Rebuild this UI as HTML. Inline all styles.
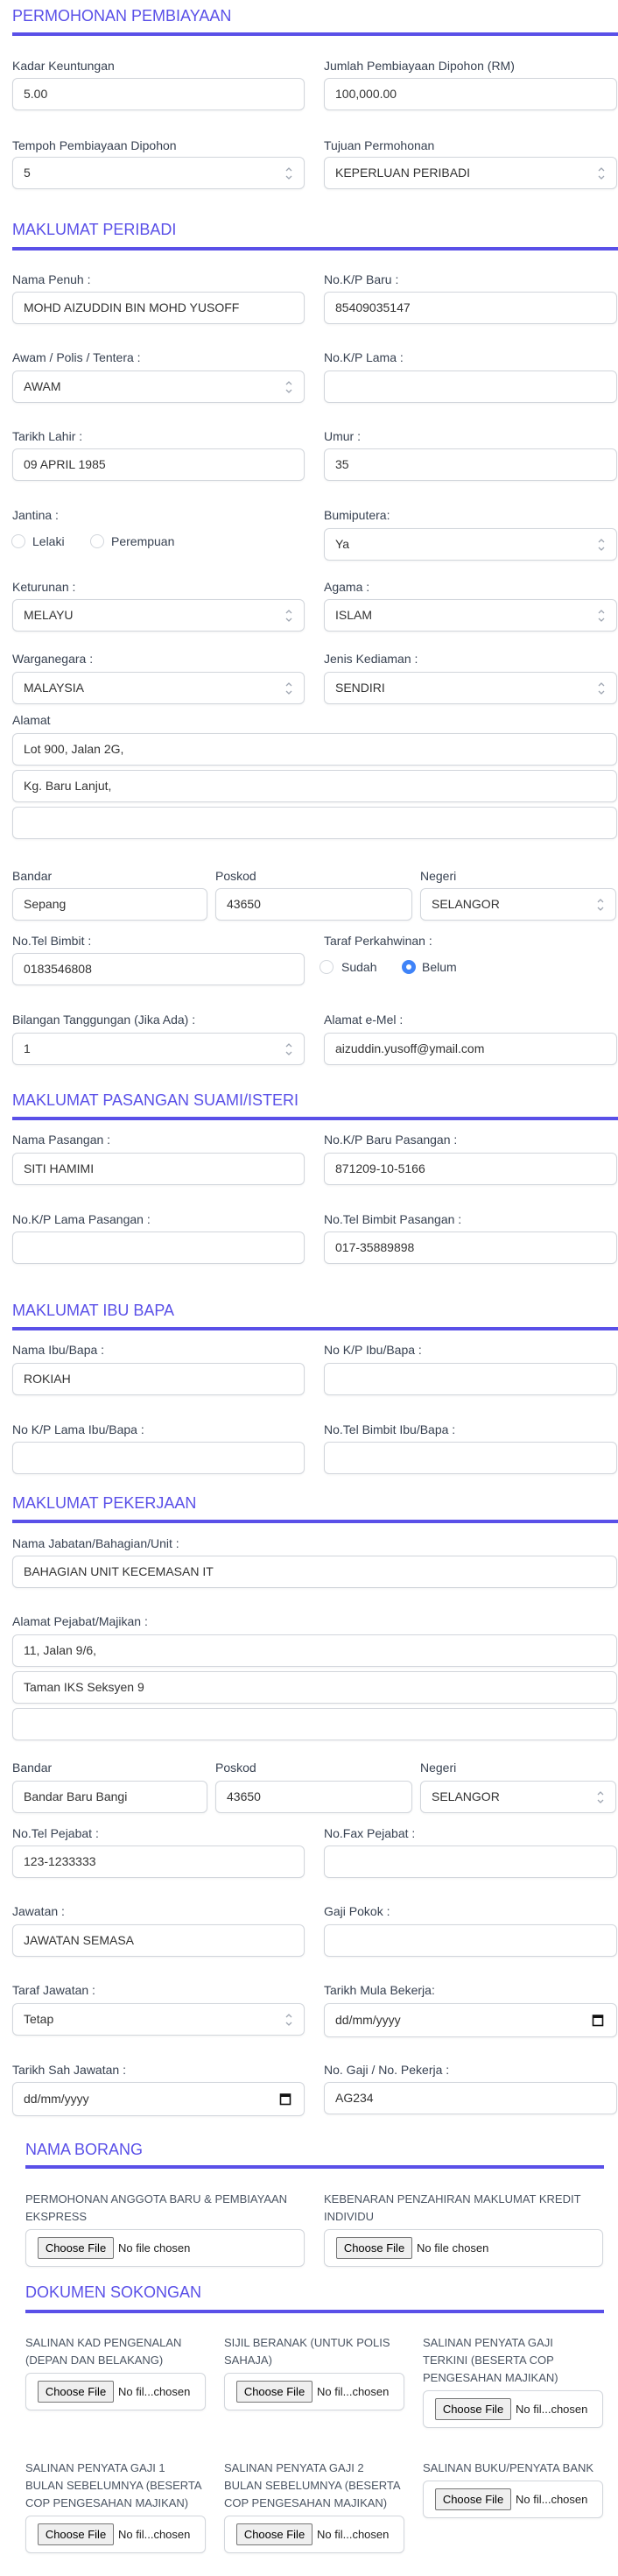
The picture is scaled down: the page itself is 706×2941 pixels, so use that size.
<!DOCTYPE html>
<html><head><meta charset="utf-8"><style>
*{margin:0;padding:0;box-sizing:border-box}
body{width:706px;height:2941px;position:relative;background:#fff;font-family:"Liberation Sans",Arial,sans-serif;overflow:hidden}
.h{position:absolute;left:14px;font-size:18px;line-height:20px;color:#5a50e8;white-space:nowrap}
.b{position:absolute;left:14px;right:0;height:4px;background:#5a50e8}
.l{position:absolute;font-size:14px;line-height:16px;color:#374151;white-space:nowrap}
.i{position:absolute;height:37px;border:1px solid #d2d6dc;border-radius:6px;box-shadow:0 1px 2px rgba(0,0,0,.05);padding-left:12px;line-height:35px;font-size:14px;color:#333;background:#fff;white-space:nowrap}
.L{left:14px;width:334px}.R{left:370px;width:335px}.F{left:14px;width:691px}
.s::after{content:"";position:absolute;right:12px;top:10px;width:10px;height:16px;background:url("data:,") }
.chev{position:absolute;right:12px;top:9px}
.cal{position:absolute;right:14px;top:10px}
.r{position:absolute;width:16px;height:16px;border:1px solid #d2d6dc;border-radius:50%;background:#fff}
.rc{background:#3f83f8;border:none}
.rc::after{content:"";position:absolute;left:5px;top:5px;width:6px;height:6px;border-radius:50%;background:#fff}
.rt{position:absolute;font-size:14px;line-height:16px;color:#374151}
.ul{position:absolute;font-size:13px;line-height:20px;color:#4b5563;white-space:nowrap}
.fb{position:absolute;height:43px;border:1px solid #d2d6dc;border-radius:6px;box-shadow:0 1px 2px rgba(0,0,0,.05);background:#fff;white-space:nowrap}
.btn{position:absolute;left:13px;top:8px;height:25px;width:87px;border:1px solid #767676;border-radius:2px;background:#efefef;font-size:13px;line-height:23px;text-align:center;color:#000}
.nf{position:absolute;left:105px;top:8px;font-size:13px;line-height:25px;color:#222}
</style></head><body>

<div class="h" style="top:8px">PERMOHONAN PEMBIAYAAN</div><div class="b" style="top:37px"></div>
<div class="l" style="left:14px;top:67px">Kadar Keuntungan</div><div class="l" style="left:370px;top:67px">Jumlah Pembiayaan Dipohon (RM)</div>
<div class="i L" style="top:89px">5.00</div><div class="i R" style="top:89px">100,000.00</div>
<div class="l" style="left:14px;top:158px">Tempoh Pembiayaan Dipohon</div><div class="l" style="left:370px;top:158px">Tujuan Permohonan</div>
<div class="i L" style="top:179px">5<svg class="chev" width="10" height="18" viewBox="0 0 10 18"><path d="M2 6l3-3 3 3M2 12l3 3 3-3" fill="none" stroke="#9fa6b2" stroke-width="1.3"/></svg></div>
<div class="i R" style="top:179px">KEPERLUAN PERIBADI<svg class="chev" width="10" height="18" viewBox="0 0 10 18"><path d="M2 6l3-3 3 3M2 12l3 3 3-3" fill="none" stroke="#9fa6b2" stroke-width="1.3"/></svg></div>

<div class="h" style="top:252px">MAKLUMAT PERIBADI</div><div class="b" style="top:282px"></div>
<div class="l" style="left:14px;top:311px">Nama Penuh :</div><div class="l" style="left:370px;top:311px">No.K/P Baru :</div>
<div class="i L" style="top:333px">MOHD AIZUDDIN BIN MOHD YUSOFF</div><div class="i R" style="top:333px">85409035147</div>
<div class="l" style="left:14px;top:400px">Awam / Polis / Tentera :</div><div class="l" style="left:370px;top:400px">No.K/P Lama :</div>
<div class="i L" style="top:423px">AWAM<svg class="chev" width="10" height="18" viewBox="0 0 10 18"><path d="M2 6l3-3 3 3M2 12l3 3 3-3" fill="none" stroke="#9fa6b2" stroke-width="1.3"/></svg></div><div class="i R" style="top:423px"></div>
<div class="l" style="left:14px;top:490px">Tarikh Lahir :</div><div class="l" style="left:370px;top:490px">Umur :</div>
<div class="i L" style="top:512px">09 APRIL 1985</div><div class="i R" style="top:512px">35</div>
<div class="l" style="left:14px;top:580px">Jantina :</div><div class="l" style="left:370px;top:580px">Bumiputera:</div>
<div class="r" style="left:13px;top:610px"></div><div class="rt" style="left:37px;top:610px">Lelaki</div>
<div class="r" style="left:103px;top:610px"></div><div class="rt" style="left:127px;top:610px">Perempuan</div>
<div class="i R" style="top:603px">Ya<svg class="chev" width="10" height="18" viewBox="0 0 10 18"><path d="M2 6l3-3 3 3M2 12l3 3 3-3" fill="none" stroke="#9fa6b2" stroke-width="1.3"/></svg></div>
<div class="l" style="left:14px;top:662px">Keturunan :</div><div class="l" style="left:370px;top:662px">Agama :</div>
<div class="i L" style="top:684px">MELAYU<svg class="chev" width="10" height="18" viewBox="0 0 10 18"><path d="M2 6l3-3 3 3M2 12l3 3 3-3" fill="none" stroke="#9fa6b2" stroke-width="1.3"/></svg></div>
<div class="i R" style="top:684px">ISLAM<svg class="chev" width="10" height="18" viewBox="0 0 10 18"><path d="M2 6l3-3 3 3M2 12l3 3 3-3" fill="none" stroke="#9fa6b2" stroke-width="1.3"/></svg></div>
<div class="l" style="left:14px;top:744px">Warganegara :</div><div class="l" style="left:370px;top:744px">Jenis Kediaman :</div>
<div class="i L" style="top:767px">MALAYSIA<svg class="chev" width="10" height="18" viewBox="0 0 10 18"><path d="M2 6l3-3 3 3M2 12l3 3 3-3" fill="none" stroke="#9fa6b2" stroke-width="1.3"/></svg></div>
<div class="i R" style="top:767px">SENDIRI<svg class="chev" width="10" height="18" viewBox="0 0 10 18"><path d="M2 6l3-3 3 3M2 12l3 3 3-3" fill="none" stroke="#9fa6b2" stroke-width="1.3"/></svg></div>
<div class="l" style="left:14px;top:814px">Alamat</div>
<div class="i F" style="top:837px">Lot 900, Jalan 2G,</div>
<div class="i F" style="top:879px">Kg. Baru Lanjut,</div>
<div class="i F" style="top:921px"></div>
<div class="l" style="left:14px;top:992px">Bandar</div><div class="l" style="left:246px;top:992px">Poskod</div><div class="l" style="left:480px;top:992px">Negeri</div>
<div class="i" style="left:14px;width:223px;top:1014px">Sepang</div>
<div class="i" style="left:246px;width:225px;top:1014px">43650</div>
<div class="i" style="left:480px;width:224px;top:1014px">SELANGOR<svg class="chev" width="10" height="18" viewBox="0 0 10 18"><path d="M2 6l3-3 3 3M2 12l3 3 3-3" fill="none" stroke="#9fa6b2" stroke-width="1.3"/></svg></div>
<div class="l" style="left:14px;top:1066px">No.Tel Bimbit :</div><div class="l" style="left:370px;top:1066px">Taraf Perkahwinan :</div>
<div class="i L" style="top:1088px">0183546808</div>
<div class="r" style="left:365px;top:1096px"></div><div class="rt" style="left:390px;top:1096px">Sudah</div>
<div class="r rc" style="left:459px;top:1096px"></div><div class="rt" style="left:482px;top:1096px">Belum</div>
<div class="l" style="left:14px;top:1156px">Bilangan Tanggungan (Jika Ada) :</div><div class="l" style="left:370px;top:1156px">Alamat e-Mel :</div>
<div class="i L" style="top:1179px">1<svg class="chev" width="10" height="18" viewBox="0 0 10 18"><path d="M2 6l3-3 3 3M2 12l3 3 3-3" fill="none" stroke="#9fa6b2" stroke-width="1.3"/></svg></div>
<div class="i R" style="top:1179px">aizuddin.yusoff@ymail.com</div>

<div class="h" style="top:1246px">MAKLUMAT PASANGAN SUAMI/ISTERI</div><div class="b" style="top:1275px"></div>
<div class="l" style="left:14px;top:1293px">Nama Pasangan :</div><div class="l" style="left:370px;top:1293px">No.K/P Baru Pasangan :</div>
<div class="i L" style="top:1316px">SITI HAMIMI</div><div class="i R" style="top:1316px">871209-10-5166</div>
<div class="l" style="left:14px;top:1384px">No.K/P Lama Pasangan :</div><div class="l" style="left:370px;top:1384px">No.Tel Bimbit Pasangan :</div>
<div class="i L" style="top:1406px"></div><div class="i R" style="top:1406px">017-35889898</div>

<div class="h" style="top:1486px">MAKLUMAT IBU BAPA</div><div class="b" style="top:1515px"></div>
<div class="l" style="left:14px;top:1533px">Nama Ibu/Bapa :</div><div class="l" style="left:370px;top:1533px">No K/P Ibu/Bapa :</div>
<div class="i L" style="top:1556px">ROKIAH</div><div class="i R" style="top:1556px"></div>
<div class="l" style="left:14px;top:1624px">No K/P Lama Ibu/Bapa :</div><div class="l" style="left:370px;top:1624px">No.Tel Bimbit Ibu/Bapa :</div>
<div class="i L" style="top:1646px"></div><div class="i R" style="top:1646px"></div>

<div class="h" style="top:1706px">MAKLUMAT PEKERJAAN</div><div class="b" style="top:1735px"></div>
<div class="l" style="left:14px;top:1754px">Nama Jabatan/Bahagian/Unit :</div>
<div class="i F" style="top:1776px">BAHAGIAN UNIT KECEMASAN IT</div>
<div class="l" style="left:14px;top:1843px">Alamat Pejabat/Majikan :</div>
<div class="i F" style="top:1866px">11, Jalan 9/6,</div>
<div class="i F" style="top:1908px">Taman IKS Seksyen 9</div>
<div class="i F" style="top:1950px"></div>
<div class="l" style="left:14px;top:2010px">Bandar</div><div class="l" style="left:246px;top:2010px">Poskod</div><div class="l" style="left:480px;top:2010px">Negeri</div>
<div class="i" style="left:14px;width:223px;top:2033px">Bandar Baru Bangi</div>
<div class="i" style="left:246px;width:225px;top:2033px">43650</div>
<div class="i" style="left:480px;width:224px;top:2033px">SELANGOR<svg class="chev" width="10" height="18" viewBox="0 0 10 18"><path d="M2 6l3-3 3 3M2 12l3 3 3-3" fill="none" stroke="#9fa6b2" stroke-width="1.3"/></svg></div>
<div class="l" style="left:14px;top:2085px">No.Tel Pejabat :</div><div class="l" style="left:370px;top:2085px">No.Fax Pejabat :</div>
<div class="i L" style="top:2107px">123-1233333</div><div class="i R" style="top:2107px"></div>
<div class="l" style="left:14px;top:2174px">Jawatan :</div><div class="l" style="left:370px;top:2174px">Gaji Pokok :</div>
<div class="i L" style="top:2197px">JAWATAN SEMASA</div><div class="i R" style="top:2197px"></div>
<div class="l" style="left:14px;top:2264px">Taraf Jawatan :</div><div class="l" style="left:370px;top:2264px">Tarikh Mula Bekerja:</div>
<div class="i L" style="top:2287px">Tetap<svg class="chev" width="10" height="18" viewBox="0 0 10 18"><path d="M2 6l3-3 3 3M2 12l3 3 3-3" fill="none" stroke="#9fa6b2" stroke-width="1.3"/></svg></div>
<div class="i R" style="top:2287px;height:39px;line-height:37px">dd/mm/yyyy<svg class="cal" width="14" height="16" viewBox="0 0 14 16"><rect x="1.5" y="3" width="11" height="11.5" fill="none" stroke="#111" stroke-width="1.6"/><rect x="1.5" y="3" width="11" height="3" fill="#111"/></svg></div>
<div class="l" style="left:14px;top:2355px">Tarikh Sah Jawatan :</div><div class="l" style="left:370px;top:2355px">No. Gaji / No. Pekerja :</div>
<div class="i L" style="top:2377px;height:39px;line-height:37px">dd/mm/yyyy<svg class="cal" width="14" height="16" viewBox="0 0 14 16"><rect x="1.5" y="3" width="11" height="11.5" fill="none" stroke="#111" stroke-width="1.6"/><rect x="1.5" y="3" width="11" height="3" fill="#111"/></svg></div>
<div class="i R" style="top:2377px">AG234</div>

<div class="h" style="left:29px;top:2444px">NAMA BORANG</div><div class="b" style="left:29px;right:16px;top:2472px"></div>
<div class="ul" style="left:29px;top:2501px">PERMOHONAN ANGGOTA BARU &amp; PEMBIAYAAN<br>EKSPRESS</div>
<div class="ul" style="left:370px;top:2501px">KEBENARAN PENZAHIRAN MAKLUMAT KREDIT<br>INDIVIDU</div>
<div class="fb" style="left:29px;width:319px;top:2545px"><div class="btn">Choose File</div><div class="nf">No file chosen</div></div>
<div class="fb" style="left:370px;width:319px;top:2545px"><div class="btn">Choose File</div><div class="nf">No file chosen</div></div>

<div class="h" style="left:29px;top:2607px">DOKUMEN SOKONGAN</div><div class="b" style="left:29px;right:16px;top:2637px"></div>
<div class="ul" style="left:29px;top:2665px">SALINAN KAD PENGENALAN<br>(DEPAN DAN BELAKANG)</div>
<div class="ul" style="left:256px;top:2665px">SIJIL BERANAK (UNTUK POLIS<br>SAHAJA)</div>
<div class="ul" style="left:483px;top:2665px">SALINAN PENYATA GAJI<br>TERKINI (BESERTA COP<br>PENGESAHAN MAJIKAN)</div>
<div class="fb" style="left:29px;width:206px;top:2709px"><div class="btn">Choose File</div><div class="nf">No fil...chosen</div></div>
<div class="fb" style="left:256px;width:206px;top:2709px"><div class="btn">Choose File</div><div class="nf">No fil...chosen</div></div>
<div class="fb" style="left:483px;width:206px;top:2729px"><div class="btn">Choose File</div><div class="nf">No fil...chosen</div></div>
<div class="ul" style="left:29px;top:2808px">SALINAN PENYATA GAJI 1<br>BULAN SEBELUMNYA (BESERTA<br>COP PENGESAHAN MAJIKAN)</div>
<div class="ul" style="left:256px;top:2808px">SALINAN PENYATA GAJI 2<br>BULAN SEBELUMNYA (BESERTA<br>COP PENGESAHAN MAJIKAN)</div>
<div class="ul" style="left:483px;top:2808px">SALINAN BUKU/PENYATA BANK</div>
<div class="fb" style="left:29px;width:206px;top:2872px"><div class="btn">Choose File</div><div class="nf">No fil...chosen</div></div>
<div class="fb" style="left:256px;width:206px;top:2872px"><div class="btn">Choose File</div><div class="nf">No fil...chosen</div></div>
<div class="fb" style="left:483px;width:206px;top:2832px"><div class="btn">Choose File</div><div class="nf">No fil...chosen</div></div>
</body></html>
